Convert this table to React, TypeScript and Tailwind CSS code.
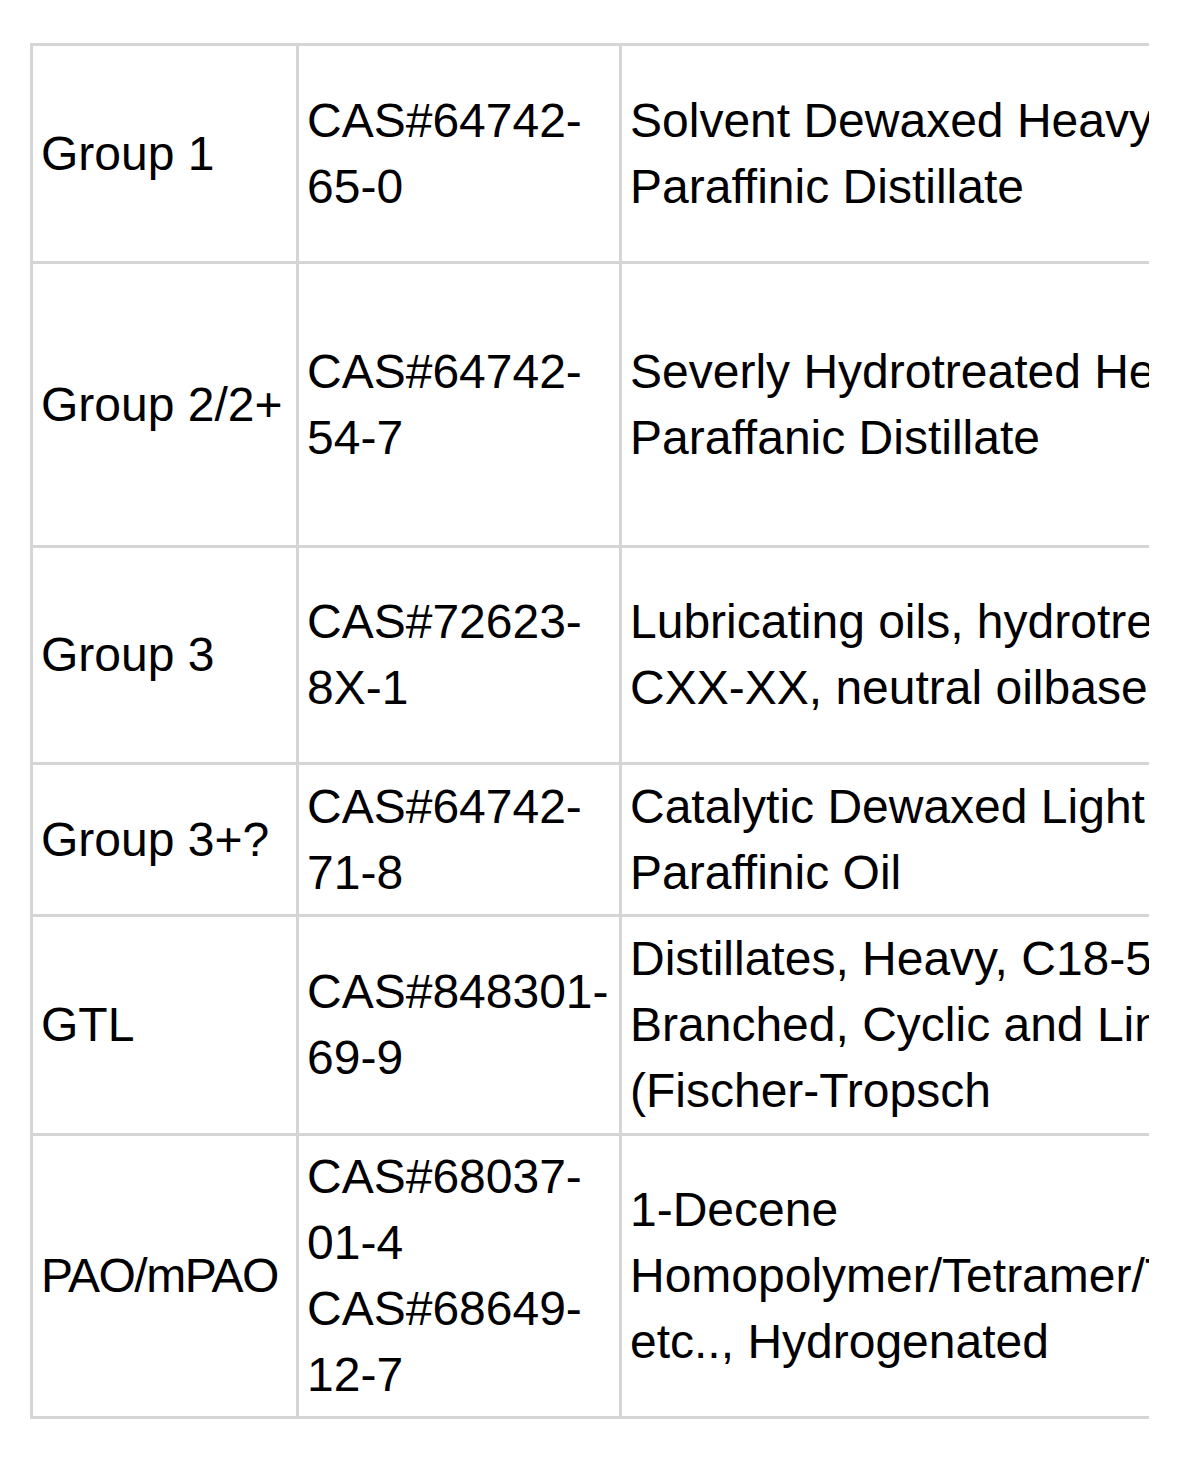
const rows: Array<{ group: string; cas: string[]; desc: string[]; h: string; tight?: boolean }> = [
  {
    group: "Group 1",
    cas: ["CAS#64742-", "65-0"],
    desc: ["Solvent Dewaxed Heavy", "Paraffinic Distillate"],
    h: "h-[218px]",
  },
  {
    group: "Group 2/2+",
    cas: ["CAS#64742-", "54-7"],
    desc: ["Severly Hydrotreated Heavy", "Paraffanic Distillate"],
    h: "h-[284px]",
  },
  {
    group: "Group 3",
    cas: ["CAS#72623-", "8X-1"],
    desc: ["Lubricating oils, hydrotreated", "CXX-XX, neutral oilbased"],
    h: "h-[217px]",
  },
  {
    group: "Group 3+?",
    cas: ["CAS#64742-", "71-8"],
    desc: ["Catalytic Dewaxed Light", "Paraffinic Oil"],
    h: "h-[152px]",
  },
  {
    group: "GTL",
    cas: ["CAS#848301-", "69-9"],
    desc: ["Distillates, Heavy, C18-50", "Branched, Cyclic and Linear", "(Fischer-Tropsch"],
    h: "h-[219px]",
  },
  {
    group: "PAO/mPAO",
    cas: ["CAS#68037-", "01-4", "CAS#68649-", "12-7"],
    desc: ["1-Decene", "Homopolymer/Tetramer/Trimer", "etc.., Hydrogenated"],
    h: "h-[282px]",
    tight: true,
  },
];

function Lines({ items }: { items: string[] }) {
  return (
    <>
      {items.map((line, i) => (
        <div key={i} className="whitespace-nowrap">
          {line}
        </div>
      ))}
    </>
  );
}

export default function App() {
  return (
    <div className="min-h-[1480px] bg-white pl-[30px] pt-[43px] font-['Liberation_Sans',Arial,sans-serif] text-black">
      <div className="w-[1119px] overflow-hidden">
        <table className="w-[1500px] table-fixed border-separate border-spacing-0 border-l-[3px] border-t-[3px] border-[#d5d5d5] text-[48px] leading-[66px]">
          <colgroup>
            <col className="w-[266px]" />
            <col className="w-[323px]" />
            <col className="w-[908px]" />
          </colgroup>
          <tbody>
            {rows.map((row) => (
              <tr key={row.group}>
                <td className={`${row.h} border-b-[3px] border-r-[3px] border-[#d5d5d5] py-2 pl-2 pr-0 align-middle`}>
                  <span className={row.tight ? "whitespace-nowrap tracking-[-1.5px]" : "whitespace-nowrap"}>
                    {row.group}
                  </span>
                </td>
                <td className="border-b-[3px] border-r-[3px] border-[#d5d5d5] py-2 pl-2 pr-0 align-middle">
                  <Lines items={row.cas} />
                </td>
                <td className="border-b-[3px] border-r-[3px] border-[#d5d5d5] py-2 pl-2 pr-2 align-middle">
                  <Lines items={row.desc} />
                </td>
              </tr>
            ))}
          </tbody>
        </table>
      </div>
    </div>
  );
}
